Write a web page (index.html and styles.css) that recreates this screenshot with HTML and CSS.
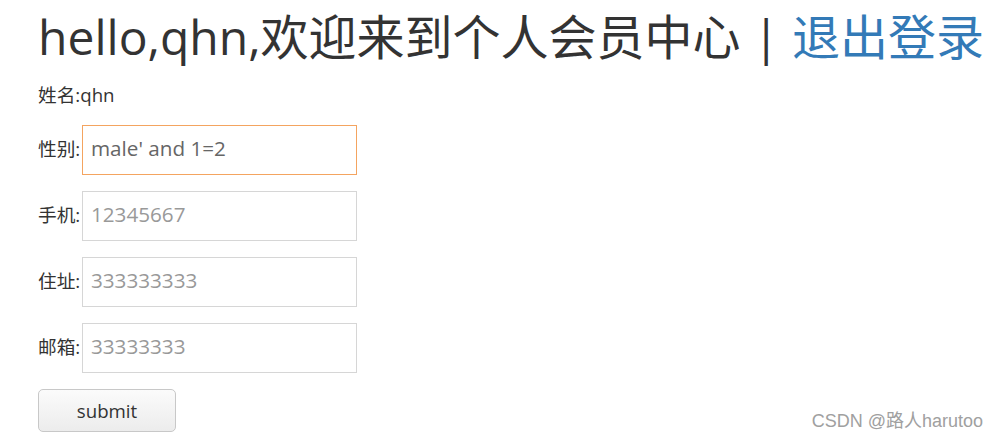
FILE: index.html
```html
<!DOCTYPE html>
<html lang="zh-CN">
<head>
<meta charset="utf-8">
<title>个人会员中心</title>
<link rel="stylesheet" href="styles.css">
</head>
<body>
<div class="page">
  <h1 class="title">hello,qhn,欢迎来到个人会员中心 | <a class="logout" href="#">退出登录</a></h1>
  <p class="name">姓名:qhn</p>
  <form class="form">
    <div class="row"><label class="label">性别:</label><input class="field focused" type="text" value="male' and 1=2"></div>
    <div class="row"><label class="label">手机:</label><input class="field" type="text" placeholder="12345667"></div>
    <div class="row"><label class="label">住址:</label><input class="field" type="text" placeholder="333333333"></div>
    <div class="row"><label class="label">邮箱:</label><input class="field" type="text" placeholder="33333333"></div>
    <button class="submit" type="button">submit</button>
  </form>
</div>
<div class="watermark">CSDN @路人harutoo</div>
</body>
</html>
```
FILE: styles.css
```css
html, body {
  margin: 0;
  padding: 0;
  background: #fff;
}
body {
  font-family: "Open Sans", "Noto Sans CJK SC", sans-serif;
  font-size: 18.67px;
  line-height: 26.67px;
  color: #333;
  position: relative;
  height: 439px;
  overflow: hidden;
}
.page {
  padding: 10px 38px 0;
}
.title {
  margin: 0;
  font-size: 48px;
  line-height: 53px;
  font-weight: 400;
  white-space: nowrap;
}
.logout {
  color: #337ab7;
  text-decoration: none;
}
.name {
  margin: 19px 0 0;
}
.form {
  margin-top: 16px;
  display: flex;
  flex-direction: column;
  gap: 16px;
  align-items: flex-start;
}
.row {
  display: flex;
  align-items: center;
}
.label {
  width: 44px;
}
.field {
  box-sizing: border-box;
  width: 275px;
  height: 50px;
  border: 1px solid #d6d6d6;
  padding: 0 8px 3px;
  font-family: "Open Sans", "Noto Sans CJK SC", sans-serif;
  font-size: 20.67px;
  color: #666;
  background: #fff;
  outline: none;
  margin: 0;
}
.field::placeholder {
  color: #999;
}
.field.focused {
  border-color: #f4a460;
}
.submit {
  box-sizing: border-box;
  width: 138px;
  height: 43px;
  border: 1px solid #c8c8c8;
  border-radius: 5px;
  background: linear-gradient(#fbfbfb, #ececec);
  font-family: "Open Sans", "Noto Sans CJK SC", sans-serif;
  font-size: 18.67px;
  color: #333;
  padding: 0;
}
.watermark {
  position: absolute;
  right: 11px;
  top: 411px;
  font-family: "Liberation Sans", "Noto Sans CJK SC", sans-serif;
  font-size: 18px;
  line-height: 20px;
  color: #a0a0a0;
}
```
